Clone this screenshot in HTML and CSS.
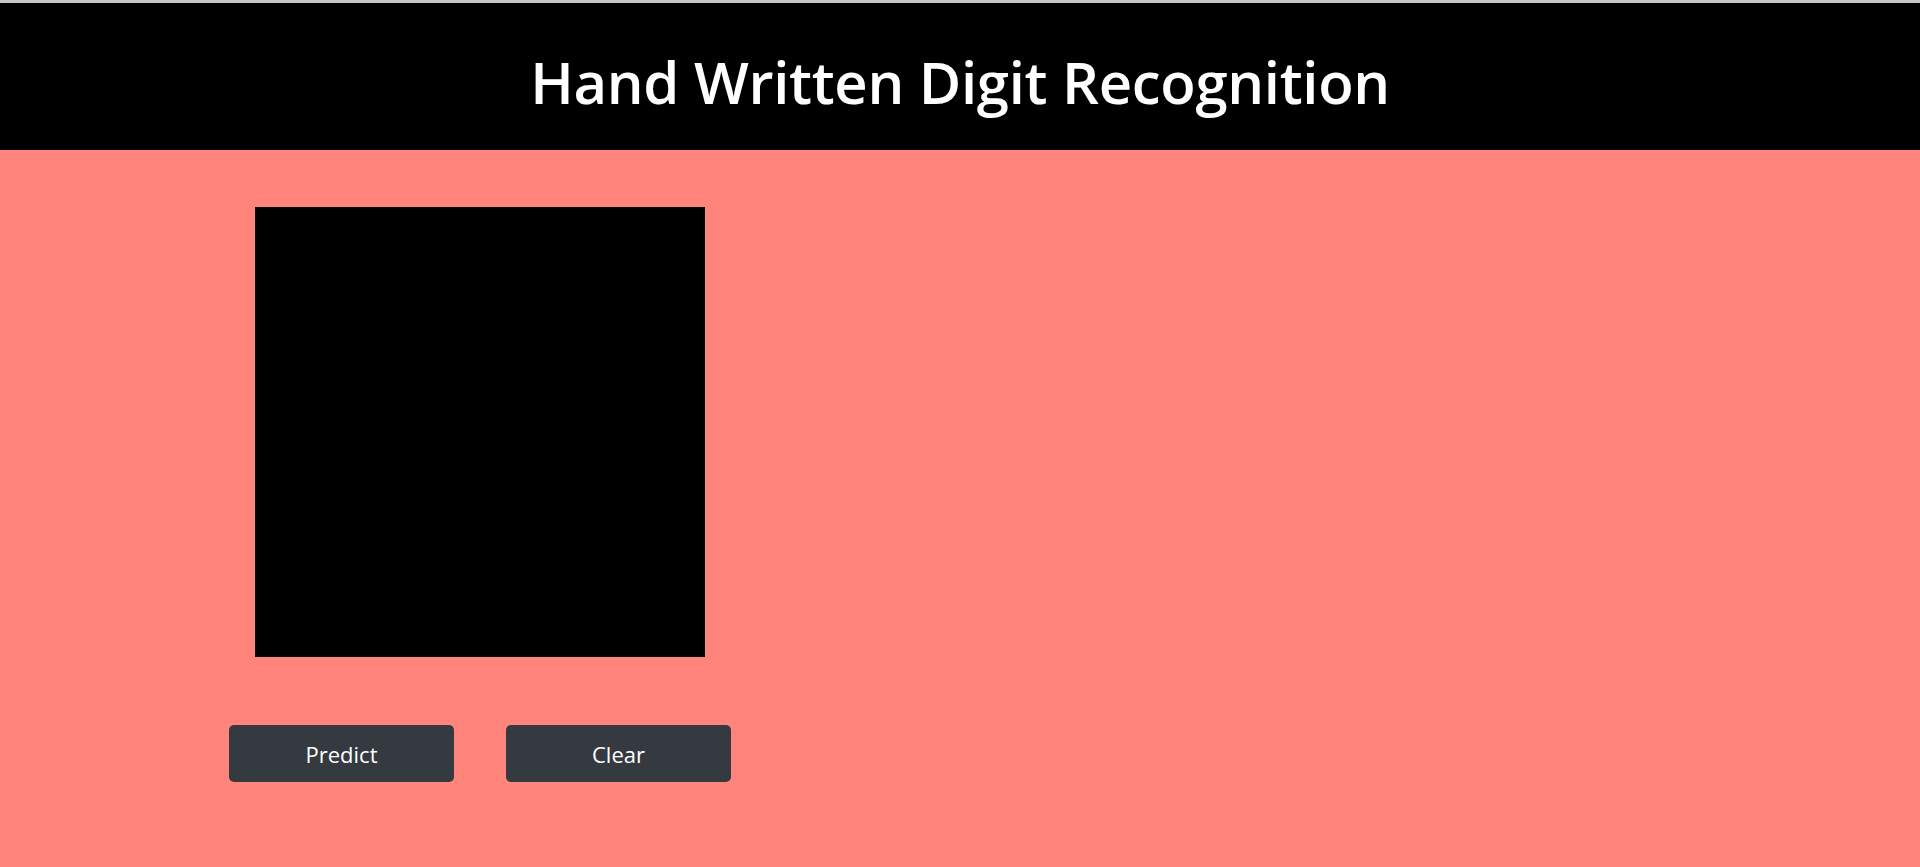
FILE: index.html
```html
<!DOCTYPE html>
<html lang="en">
<head>
<meta charset="utf-8">
<title>Hand Written Digit Recognition</title>
<link rel="stylesheet" href="styles.css">
</head>
<body>
<header class="topbar">
  <h1 class="title">Hand Written Digit Recognition</h1>
</header>
<main class="page">
  <section class="board">
    <canvas class="pad" width="450" height="450"></canvas>
    <div class="actions">
      <button class="btn" type="button">Predict</button>
      <button class="btn" type="button">Clear</button>
    </div>
  </section>
</main>
</body>
</html>
```
FILE: styles.css
```css
html, body {
  margin: 0;
  padding: 0;
  height: 100%;
}
body {
  background: #ff847c;
  font-family: "Open Sans", "Noto Sans", sans-serif;
  border-top: 3px solid #c5c6ca;
  box-sizing: border-box;
}
.topbar {
  background: #000;
  height: 147px;
  display: flex;
  align-items: center;
  justify-content: center;
}
.title {
  margin: 0;
  color: #fff;
  font-weight: 600;
  font-size: 58px;
  letter-spacing: -0.3px;
  line-height: 1;
  padding-top: 10px;
}
.page {
  padding-left: 229px;
}
.board {
  width: 502px;
  display: flex;
  flex-direction: column;
  align-items: center;
  padding-top: 57px;
}
.pad {
  display: block;
  width: 450px;
  height: 450px;
  background: #000;
}
.actions {
  margin-top: 68px;
  display: flex;
  gap: 52px;
}
.btn {
  width: 225px;
  height: 57px;
  background: #343a40;
  color: #fff;
  border: none;
  border-radius: 5px;
  font-family: "Open Sans", "Noto Sans", sans-serif;
  font-size: 22px;
  padding: 0;
}
```
